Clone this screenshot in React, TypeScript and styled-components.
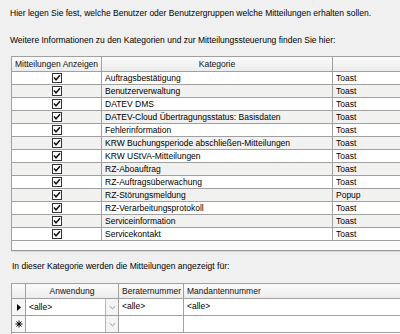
import React from "react";
import styled, { createGlobalStyle } from "styled-components";

const GlobalStyle = createGlobalStyle`
  html, body { margin: 0; padding: 0; }
  body {
    background: #f0f0f0;
    font-family: "Liberation Sans", Arial, sans-serif;
    font-size: 8.5px;
    color: #000;
  }
`;

const Page = styled.div`
  width: 400px;
  height: 334px;
  overflow: hidden;
  padding-top: 8px;
  box-sizing: border-box;
  background: #f0f0f0;
`;

const Label = styled.div<{ $left: number; $top: number }>`
  margin-left: ${(p) => p.$left}px;
  margin-top: ${(p) => p.$top}px;
  height: 11px;
  line-height: 11px;
  white-space: nowrap;
`;

const Frame = styled.div<{ $top: number; $height: number }>`
  margin-top: ${(p) => p.$top}px;
  margin-left: 11px;
  width: 440px;
  height: ${(p) => p.$height}px;
  box-sizing: border-box;
  border: 1px solid #a0a0a0;
  border-bottom-color: #9a9a9a;
  box-shadow: 0 1px 0 #d6d6d6;
  background: #fbfbfb;
  overflow: hidden;
`;

const HeaderRow = styled.div<{ $cols: string }>`
  display: grid;
  grid-template-columns: ${(p) => p.$cols};
  height: 15px;
  box-sizing: border-box;
  border-bottom: 1px solid #a0a0a0;
  background: linear-gradient(#fbfbfb, #ececec);
`;

const HeaderCell = styled.div<{ $align?: string }>`
  border-right: 1px solid #a0a0a0;
  line-height: 14px;
  text-align: ${(p) => p.$align || "center"};
  padding-left: ${(p) => (p.$align === "left" ? 3 : 0)}px;
  white-space: nowrap;
  overflow: hidden;
  color: #111;
`;

const Row = styled.div<{ $cols: string; $h: number; $alt?: boolean }>`
  display: grid;
  grid-template-columns: ${(p) => p.$cols};
  height: ${(p) => p.$h}px;
  box-sizing: border-box;
  border-bottom: 1px solid #a0a0a0;
  background: ${(p) => (p.$alt ? "#f1f1ef" : "#ffffff")};
`;

const Cell = styled.div<{ $lh: number }>`
  border-right: 1px solid #a0a0a0;
  padding-left: 3px;
  line-height: ${(p) => p.$lh}px;
  white-space: nowrap;
  overflow: hidden;
`;

const CheckCell = styled.div`
  border-right: 1px solid #a0a0a0;
  display: flex;
  justify-content: center;
  align-items: center;
  padding-left: 1px;
`;

const RowHead = styled.div`
  border-right: 1px solid #a0a0a0;
  background: #f6f6f6;
  display: flex;
  align-items: center;
  justify-content: center;
`;

const ComboCell = styled.div`
  border-right: 1px solid #a0a0a0;
  display: grid;
  grid-template-columns: 1fr 13px;
`;

const ComboText = styled.div`
  padding-left: 3px;
  line-height: 16px;
  white-space: nowrap;
`;

const ComboButton = styled.div`
  border-left: 1px solid #b8b8b8;
  background: #f4f4f4;
  display: flex;
  justify-content: center;
  align-items: center;
`;

const Check = () => (
  <svg width="10" height="10" viewBox="0 0 10 10">
    <rect x="0.5" y="0.5" width="9" height="9" fill="#fff" stroke="#333" />
    <path d="M2 4.6 L4 6.8 L8 2.3" fill="none" stroke="#111" strokeWidth="1.5" />
  </svg>
);

const Chevron = () => (
  <svg width="7" height="5" viewBox="0 0 7 5">
    <path d="M0.8 1.2 L3.5 3.8 L6.2 1.2" fill="none" stroke="#8a8a8a" strokeWidth="0.9" />
  </svg>
);

const Arrow = () => (
  <svg width="4" height="7" viewBox="0 0 4 7">
    <path d="M0 0 L4 3.5 L0 7 Z" fill="#000" />
  </svg>
);

const Star = () => (
  <svg width="8" height="8" viewBox="0 0 8 8">
    <g stroke="#000" strokeWidth="1">
      <line x1="4" y1="0.5" x2="4" y2="7.5" />
      <line x1="0.5" y1="4" x2="7.5" y2="4" />
      <line x1="1.5" y1="1.5" x2="6.5" y2="6.5" />
      <line x1="6.5" y1="1.5" x2="1.5" y2="6.5" />
    </g>
  </svg>
);

const rows: [string, string][] = [
  ["Auftragsbestätigung", "Toast"],
  ["Benutzerverwaltung", "Toast"],
  ["DATEV DMS", "Toast"],
  ["DATEV-Cloud Übertragungsstatus: Basisdaten", "Toast"],
  ["Fehlerinformation", "Toast"],
  ["KRW Buchungsperiode abschließen-Mitteilungen", "Toast"],
  ["KRW UStVA-Mitteilungen", "Toast"],
  ["RZ-Aboauftrag", "Toast"],
  ["RZ-Auftragsüberwachung", "Toast"],
  ["RZ-Störungsmeldung", "Popup"],
  ["RZ-Verarbeitungsprotokoll", "Toast"],
  ["Serviceinformation", "Toast"],
  ["Servicekontakt", "Toast"],
];

const COLS1 = "90px 231px 117px";
const COLS2 = "14px 93px 65px 266px";

export default function App() {
  return (
    <>
      <GlobalStyle />
      <Page>
        <Label $left={10} $top={0}>
          Hier legen Sie fest, welche Benutzer oder Benutzergruppen welche Mitteilungen erhalten sollen.
        </Label>
        <Label $left={10} $top={16}>
          Weitere Informationen zu den Kategorien und zur Mitteilungssteuerung finden Sie hier:
        </Label>
        <Frame $top={10} $height={195}>
          <HeaderRow $cols={COLS1}>
            <HeaderCell>Mitteilungen Anzeigen</HeaderCell>
            <HeaderCell>Kategorie</HeaderCell>
            <HeaderCell />
          </HeaderRow>
          {rows.map(([name, mode], i) => (
            <Row key={name} $cols={COLS1} $h={13} $alt={i % 2 === 1}>
              <CheckCell>
                <Check />
              </CheckCell>
              <Cell $lh={12}>{name}</Cell>
              <Cell $lh={12}>{mode}</Cell>
            </Row>
          ))}
        </Frame>
        <Label $left={12} $top={10}>
          In dieser Kategorie werden die Mitteilungen angezeigt für:
        </Label>
        <Frame $top={11} $height={52}>
          <HeaderRow $cols={COLS2}>
            <HeaderCell />
            <HeaderCell>Anwendung</HeaderCell>
            <HeaderCell $align="left">Beraternummer</HeaderCell>
            <HeaderCell $align="left">Mandantennummer</HeaderCell>
          </HeaderRow>
          <Row $cols={COLS2} $h={17}>
            <RowHead>
              <Arrow />
            </RowHead>
            <ComboCell>
              <ComboText>&lt;alle&gt;</ComboText>
              <ComboButton>
                <Chevron />
              </ComboButton>
            </ComboCell>
            <Cell $lh={14}>&lt;alle&gt;</Cell>
            <Cell $lh={14}>&lt;alle&gt;</Cell>
          </Row>
          <Row $cols={COLS2} $h={17}>
            <RowHead>
              <Star />
            </RowHead>
            <ComboCell>
              <ComboText />
              <ComboButton>
                <Chevron />
              </ComboButton>
            </ComboCell>
            <Cell $lh={14} />
            <Cell $lh={14} />
          </Row>
        </Frame>
      </Page>
    </>
  );
}
